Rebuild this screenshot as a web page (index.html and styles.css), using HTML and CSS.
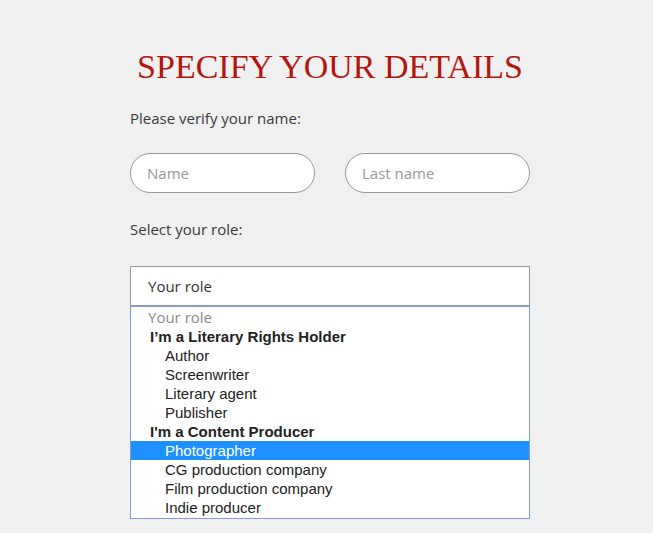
FILE: index.html
```html
<!DOCTYPE html>
<html lang="en">
<head>
    <meta charset="UTF-8">
    <meta name="viewport" content="width=device-width, initial-scale=1.0">
    <title>Specify your details</title>
    <link rel="stylesheet" href="styles.css">
</head>
<body>
    <div class="container">
        <h1>SPECIFY YOUR DETAILS</h1>
        <p class="label">Please verify your name:</p>
        <div class="name-row">
            <input type="text" class="pill" placeholder="Name">
            <input type="text" class="pill" placeholder="Last name">
        </div>
        <p class="label">Select your role:</p>
        <div class="role-select">
            <div class="role-current">Your role</div>
            <ul class="role-list">
                <li class="placeholder">Your role</li>
                <li class="group">I’m a Literary Rights Holder</li>
                <li class="option">Author</li>
                <li class="option">Screenwriter</li>
                <li class="option">Literary agent</li>
                <li class="option">Publisher</li>
                <li class="group">I'm a Content Producer</li>
                <li class="option selected">Photographer</li>
                <li class="option">CG production company</li>
                <li class="option">Film production company</li>
                <li class="option">Indie producer</li>
            </ul>
        </div>
    </div>
</body>
</html>
```

FILE: styles.css
```css
body { margin: 0; background: #f0f0f0; font-family: "Open Sans", sans-serif; color: #333; }
.container { width: 400px; margin: 0 auto; padding: 46px 0 0 7px; }
h1 { margin: 0 0 20px; font-family: "Liberation Serif", serif; font-weight: normal; font-size: 34px; color: #b3160f; text-align: center; line-height: 42px; white-space: nowrap; }
.label { margin: 0; font-size: 15px; line-height: 20px; color: #3a3a3a; }
.name-row { display: flex; gap: 30px; margin: 25px 0 26px; }
.pill { width: 185px; height: 40px; box-sizing: border-box; border: 1px solid #999; border-radius: 20px; padding: 0 16px; font-family: "Open Sans", sans-serif; font-size: 15px; color: #333; background: #fff; outline: none; }
.pill::placeholder { color: #999; }
.role-select { margin-top: 27px; }
.role-current { height: 40px; box-sizing: border-box; border: 1px solid #999; background: #fff; padding: 0 17px; font-size: 15px; line-height: 38px; }
.role-list { list-style: none; margin: 0; padding: 1px 0; border: 1px solid #7f9ddc; background: #fff; font-family: "Liberation Sans", Arial, sans-serif; font-size: 15px; color: #222; }
.role-list li { height: 19px; line-height: 19px; white-space: nowrap; }
.placeholder { padding-left: 17px; font-family: "Open Sans", sans-serif; color: #888; }
.group { padding-left: 19px; font-weight: bold; }
.option { padding-left: 34px; }
.selected { background: #1e90ff; color: #fff; }
```
